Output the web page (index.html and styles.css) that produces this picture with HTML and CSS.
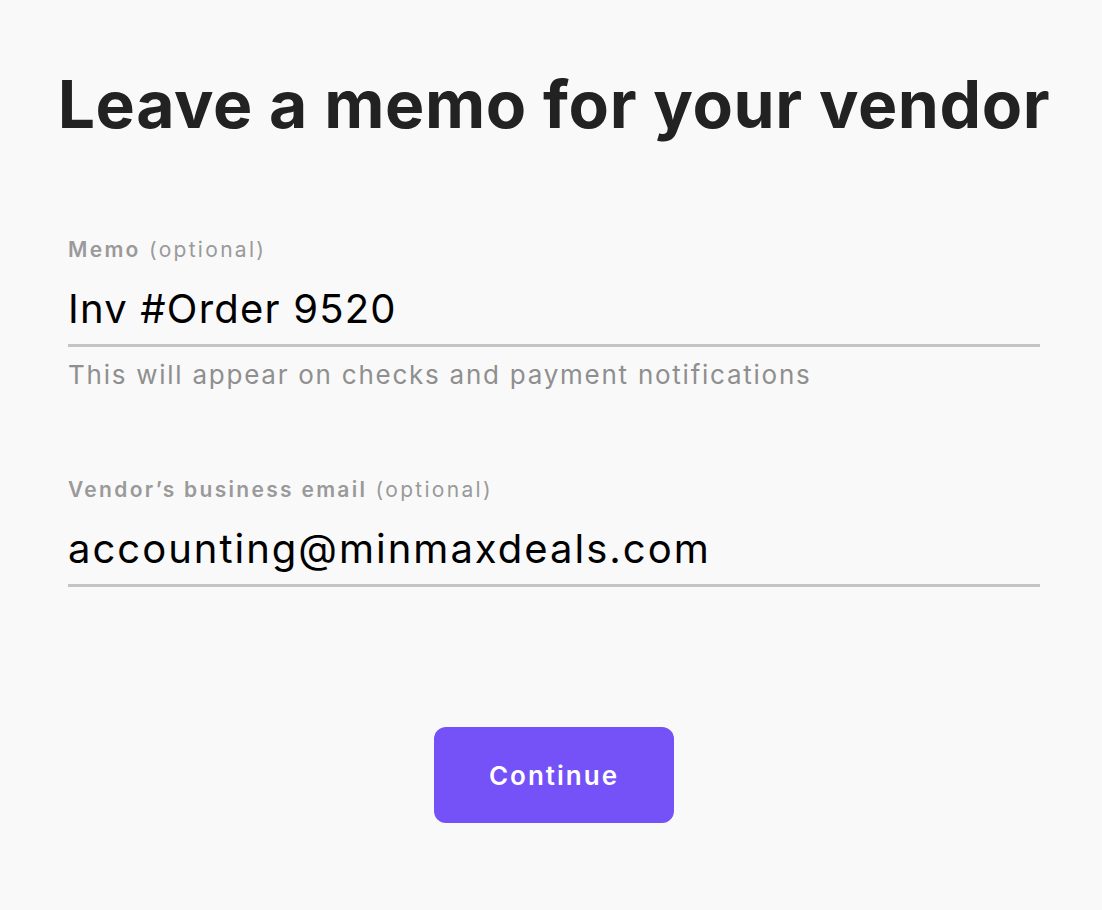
FILE: index.html
```html
<!DOCTYPE html>
<html lang="en">
<head>
<meta charset="utf-8">
<title>Leave a memo for your vendor</title>
<link rel="stylesheet" href="styles.css">
</head>
<body>
<main class="page">
  <h1 class="title">Leave a memo for your vendor</h1>
  <section class="field field-memo">
    <div class="label"><span class="label-strong">Memo</span> <span class="label-opt">(optional)</span></div>
    <div class="input">Inv #Order 9520</div>
    <div class="helper">This will appear on checks and payment notifications</div>
  </section>
  <section class="field field-email">
    <div class="label"><span class="label-strong">Vendor’s business email</span> <span class="label-opt">(optional)</span></div>
    <div class="input input-email">accounting@minmaxdeals.com</div>
  </section>
  <div class="actions">
    <button class="btn" type="button">Continue</button>
  </div>
</main>
</body>
</html>
```
FILE: styles.css
```css
html, body {
  margin: 0;
  padding: 0;
  background: #f9f9f9;
}
body {
  font-family: "Inter", "Open Sans", sans-serif;
  color: #000;
}
.page {
  display: flex;
  flex-direction: column;
  padding: 64px 62px 0 68px;
}
.title {
  margin: 0 -60px;
  font-size: 66px;
  line-height: 80px;
  font-weight: 700;
  color: #222222;
  text-align: center;
  white-space: nowrap;
  letter-spacing: 0.6px;
}
.field {
  display: flex;
  flex-direction: column;
}
.field-memo {
  margin-top: 92px;
}
.field-email {
  margin-top: 83px;
}
.label {
  font-size: 21px;
  line-height: 28px;
  color: #9a9a9a;
  letter-spacing: 2.3px;
}
.label-strong {
  font-weight: 600;
}
.label-opt {
  font-weight: 400;
}
.input {
  margin-top: 17px;
  font-size: 40px;
  line-height: 56px;
  padding-bottom: 7px;
  border-bottom: 3px solid #c4c4c4;
  color: #000;
  letter-spacing: 1.2px;
}
.input-email {
  letter-spacing: 2px;
}
.helper {
  margin-top: 10px;
  font-size: 26px;
  line-height: 36px;
  color: #8f8f8f;
  letter-spacing: 1.75px;
}
.actions {
  display: flex;
  justify-content: center;
  margin-top: 140px;
}
.btn {
  width: 240px;
  height: 96px;
  border: 0;
  border-radius: 12px;
  background: #7551f8;
  color: #ffffff;
  font-family: inherit;
  font-size: 26px;
  font-weight: 600;
  letter-spacing: 2px;
  cursor: pointer;
}
```
